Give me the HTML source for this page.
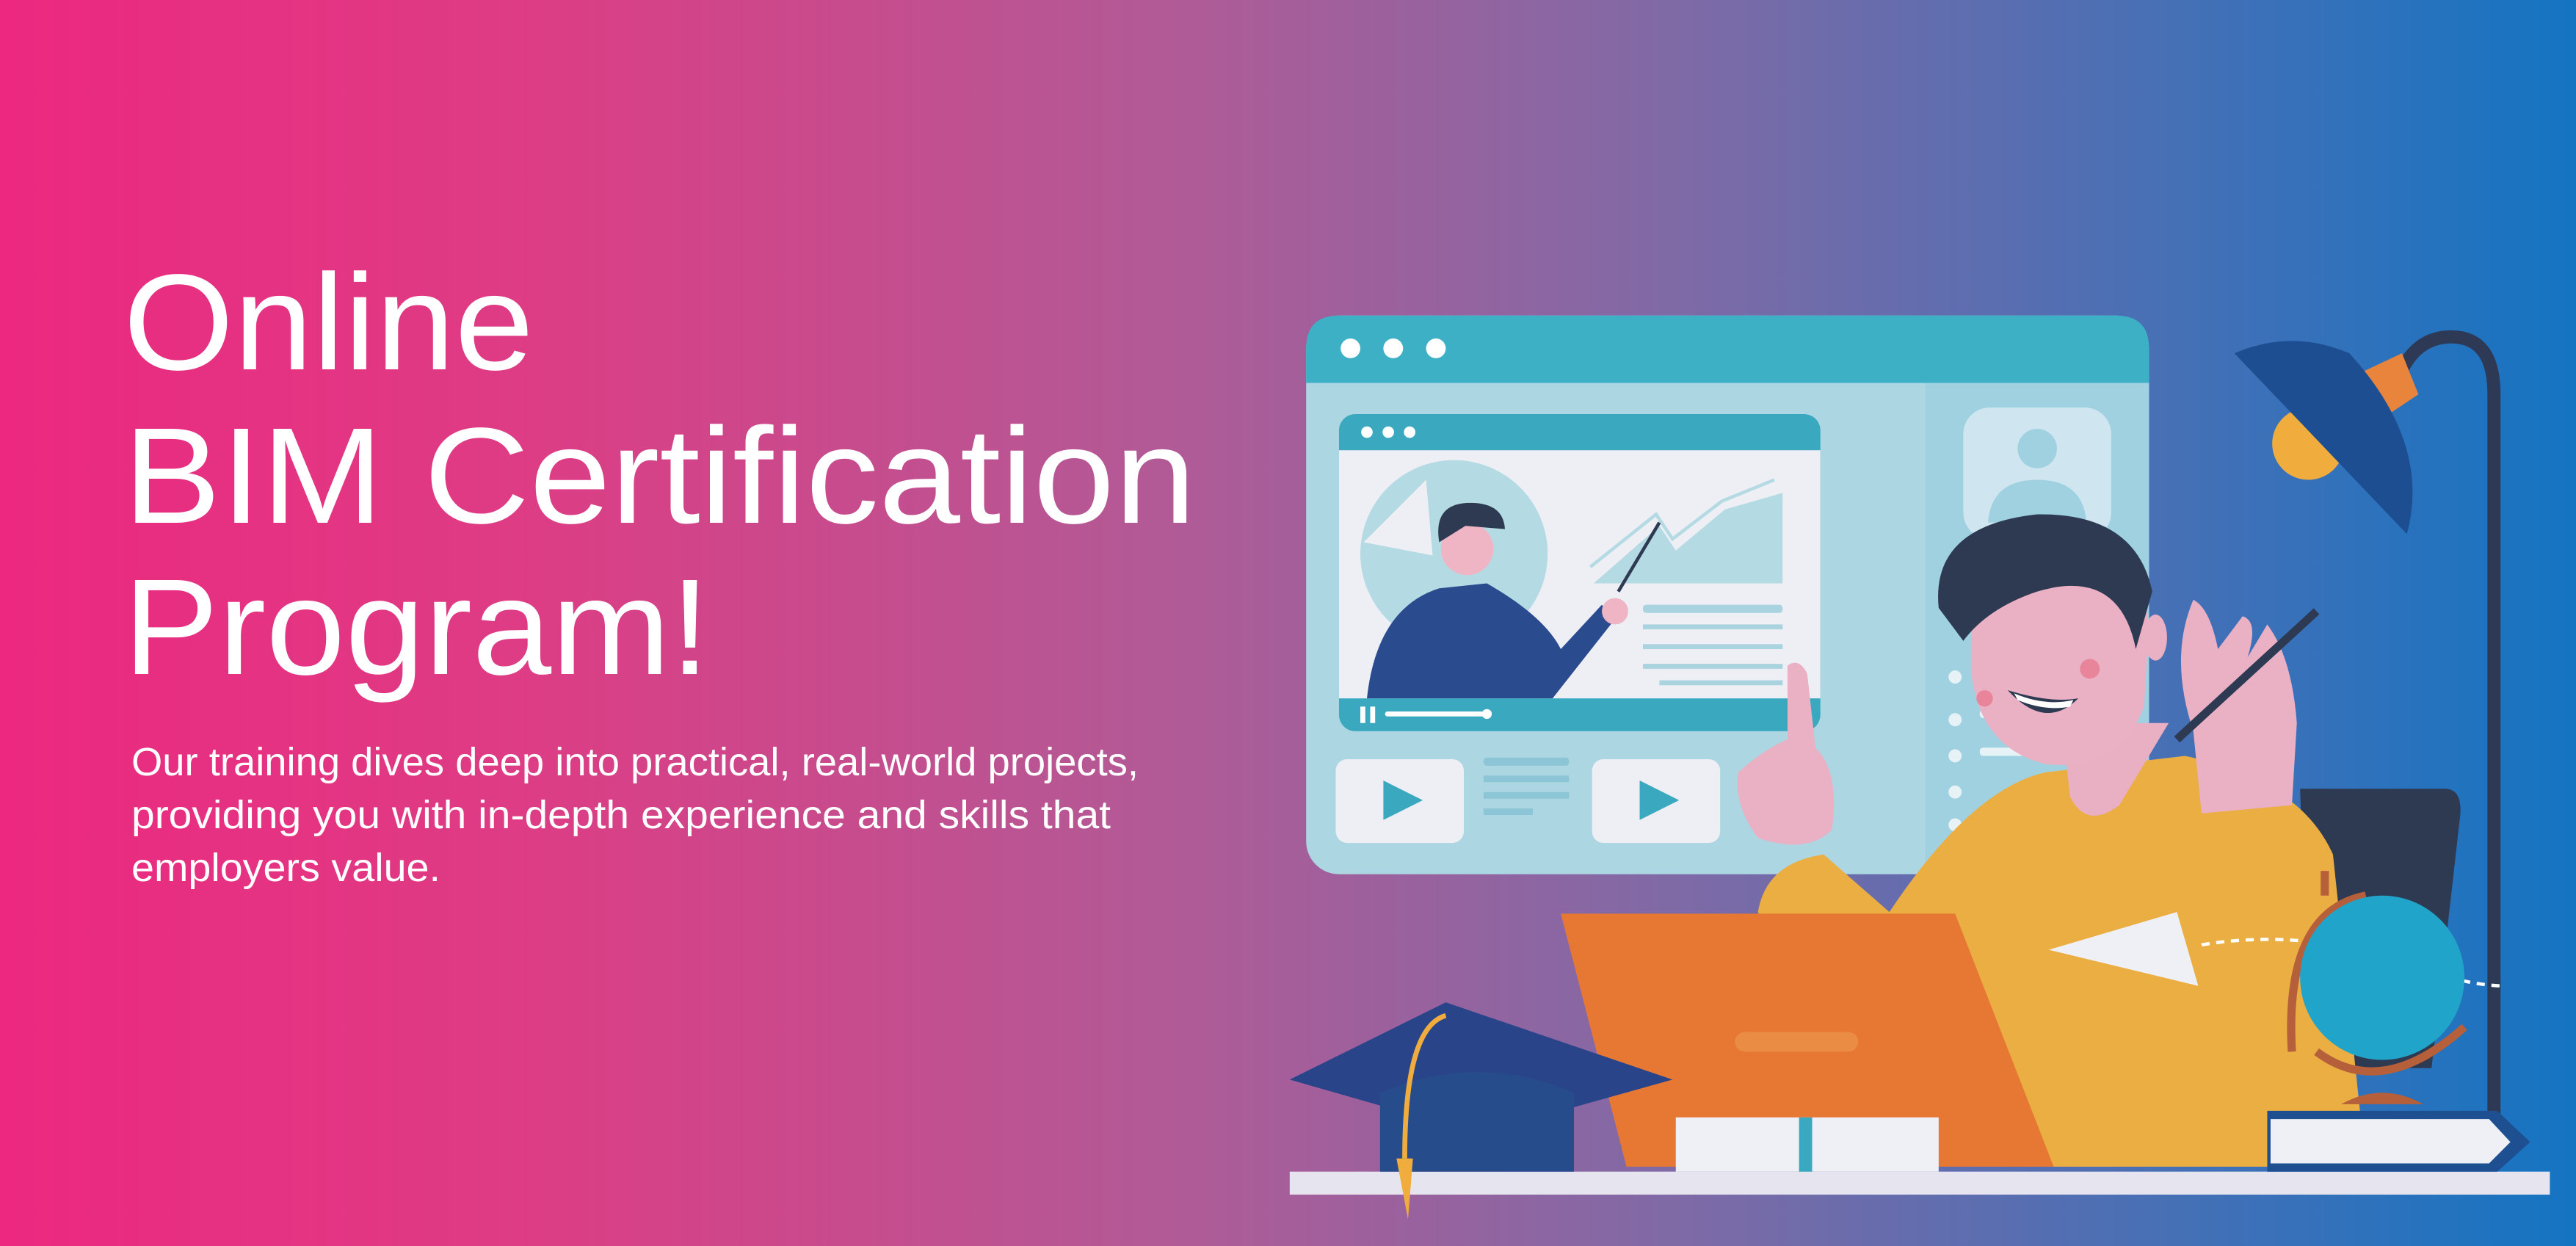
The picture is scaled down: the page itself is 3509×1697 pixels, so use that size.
<!DOCTYPE html>
<html><head><meta charset="utf-8"><style>
html,body{margin:0;padding:0;width:3509px;height:1697px;overflow:hidden}
svg{display:block}
</style></head><body>
<svg width="3509" height="1697" viewBox="0 0 3509 1697" xmlns="http://www.w3.org/2000/svg">
<defs>
<linearGradient id="bg" x1="0" y1="0" x2="1" y2="0">
<stop offset="0" stop-color="#ec2880"/>
<stop offset="0.2" stop-color="#de3c84"/>
<stop offset="0.45" stop-color="#b25a96"/>
<stop offset="0.65" stop-color="#7f6aa6"/>
<stop offset="0.85" stop-color="#4470b6"/>
<stop offset="1" stop-color="#1474c2"/>
</linearGradient>
</defs>
<rect width="3509" height="1697" fill="url(#bg)"/>
<g fill="#fff" font-family="'Liberation Sans',sans-serif">
<text x="168" y="503" font-size="186" textLength="559" lengthAdjust="spacingAndGlyphs">Online</text>
<text x="168" y="712" font-size="186" textLength="1461" lengthAdjust="spacingAndGlyphs">BIM Certification</text>
<text x="168" y="918" font-size="186" textLength="799" lengthAdjust="spacingAndGlyphs">Program!</text>
<text x="179" y="1056" font-size="54" textLength="1372" lengthAdjust="spacingAndGlyphs">Our training dives deep into practical, real-world projects,</text>
<text x="179" y="1128" font-size="54" textLength="1334" lengthAdjust="spacingAndGlyphs">providing you with in-depth experience and skills that</text>
<text x="179" y="1200" font-size="54" textLength="421" lengthAdjust="spacingAndGlyphs">employers value.</text>
</g>
<g transform="scale(2.238)">
<!-- lamp pole -->
<path d="M1518 690 V240 Q1518 205 1492 205 Q1472 205 1462 225" fill="none" stroke="#2e3a55" stroke-width="8"/>
<path d="M1430 230 L1462 215 L1472 240 L1445 258Z" fill="#e8843c"/>
<circle cx="1405" cy="270" r="22" fill="#f0ad3e"/>
<path d="M1360 215 Q1395 200 1430 215 Q1480 270 1465 325 Z" fill="#1d4e91"/>
<!-- browser window -->
<rect x="795" y="192" width="513" height="340" rx="20" fill="#acd6e2"/>
<path d="M815 192 H1288 Q1308 192 1308 212 V233 H795 V212 Q795 192 815 192Z" fill="#3db0c6"/>
<rect x="1172" y="233" width="136" height="299" fill="#9fd1e1"/>
<path d="M1172 233 H1308 V512 Q1308 532 1288 532 H1172Z" fill="#9fd1e1"/>
<circle cx="822" cy="212" r="6" fill="#fff"/><circle cx="848" cy="212" r="6" fill="#fff"/><circle cx="874" cy="212" r="6" fill="#fff"/>
<rect x="1195" y="248" width="90" height="80" rx="16" fill="#cfe6f0"/>
<circle cx="1240" cy="273" r="12" fill="#9fd1e1"/>
<path d="M1210 318 Q1212 292 1240 292 Q1268 292 1270 318Z" fill="#9fd1e1"/>
<g fill="#e7f2f6"><circle cx="1190" cy="412" r="4"/><circle cx="1190" cy="438" r="4"/><circle cx="1190" cy="460" r="4"/><circle cx="1190" cy="482" r="4"/><circle cx="1190" cy="502" r="4"/>
<rect x="1205" y="432" width="40" height="5" rx="2"/><rect x="1205" y="455" width="40" height="5" rx="2"/></g>
<!-- inner video -->
<rect x="815" y="252" width="293" height="193" rx="10" fill="#3aa9bf"/>
<rect x="815" y="274" width="293" height="151" fill="#eeeef5"/>
<circle cx="832" cy="263" r="3.5" fill="#fff"/><circle cx="845" cy="263" r="3.5" fill="#fff"/><circle cx="858" cy="263" r="3.5" fill="#fff"/>
<rect x="828" y="430" width="3" height="10" fill="#fff"/><rect x="834" y="430" width="3" height="10" fill="#fff"/>
<rect x="843" y="433" width="62" height="3" rx="1.5" fill="#fff"/><circle cx="905" cy="434.5" r="3" fill="#fff"/>
<circle cx="885" cy="337" r="57" fill="#b4dae3"/>
<path d="M868 292 L830 330 L872 338Z" fill="#eeeef5"/>
<path d="M970 355 L1010 320 L1020 335 L1050 310 L1085 300 V355Z" fill="#b4dae3"/>
<path d="M968 345 L1008 313 L1018 328 L1048 305 L1080 292" fill="none" stroke="#b4dae3" stroke-width="2"/>
<g fill="#a8d3df"><rect x="1000" y="368" width="85" height="5" rx="2"/><rect x="1000" y="380" width="85" height="3"/><rect x="1000" y="392" width="85" height="3"/><rect x="1000" y="404" width="85" height="3"/><rect x="1010" y="414" width="75" height="3"/></g>
<path d="M832 425 Q838 370 876 358 L905 355 Q940 375 950 395 L975 368 L982 378 L945 425Z" fill="#2a4b8e"/>
<circle cx="893" cy="334" r="16" fill="#efb5c4"/>
<path d="M876 330 Q872 306 895 306 Q915 306 916 322 L892 320 Z" fill="#2d3a52"/>
<line x1="985" y1="360" x2="1010" y2="318" stroke="#2d3a52" stroke-width="2"/>
<circle cx="983" cy="372" r="8" fill="#efb5c4"/>
<!-- play buttons -->
<rect x="813" y="462" width="78" height="51" rx="7" fill="#eeeef5"/>
<rect x="969" y="462" width="78" height="51" rx="7" fill="#eeeef5"/>
<path d="M842 475 L866 487 L842 499Z" fill="#3aa9bf"/><path d="M998 475 L1022 487 L998 499Z" fill="#3aa9bf"/>
<g fill="#8cc6d6"><rect x="903" y="461" width="52" height="5" rx="2"/><rect x="903" y="472" width="52" height="4"/><rect x="903" y="482" width="52" height="4"/><rect x="903" y="492" width="30" height="4"/></g>
<!-- chair -->
<path d="M1400 480 H1488 Q1500 480 1497 500 L1480 650 H1405Z" fill="#2d3a52"/>
<!-- boy body -->
<path d="M1070 555 Q1075 525 1110 520 L1150 555 Q1200 480 1245 470 L1330 460 Q1400 475 1420 520 L1440 710 H1150Z" fill="#eaae42"/>
<path d="M1255 440 L1260 485 Q1270 505 1290 490 L1320 440Z" fill="#e9afc2"/>
<!-- head -->
<path d="M1200 380 Q1198 330 1250 325 Q1300 330 1308 380 L1305 430 Q1290 470 1245 465 Q1205 455 1200 410Z" fill="#eab0c3"/>
<path d="M1180 370 Q1175 320 1240 313 Q1300 312 1310 360 L1300 395 Q1290 345 1240 360 Q1210 370 1195 390Z" fill="#2d3a52"/>
<path d="M1222 420 Q1245 445 1265 425 Q1248 428 1222 420Z" fill="#2d3a52"/>
<path d="M1226 422 Q1245 430 1262 426 L1260 430 Q1245 433 1228 426Z" fill="#fff"/>
<ellipse cx="1312" cy="388" rx="7" ry="14" fill="#eab0c3"/>
<circle cx="1208" cy="425" r="5" fill="#e9859b"/><circle cx="1272" cy="407" r="6" fill="#e9859b"/>
<!-- hands -->
<path d="M1088 405 Q1095 400 1100 410 L1105 455 Q1120 470 1115 505 Q1100 520 1070 510 Q1055 490 1058 470 Q1075 455 1088 450Z" fill="#eab0c3"/>
<path d="M1335 445 Q1320 400 1335 365 Q1345 370 1350 395 L1365 375 Q1375 378 1368 400 L1380 380 Q1395 400 1398 440 L1395 490 L1340 495Z" fill="#eab0c3"/>
<line x1="1325" y1="450" x2="1410" y2="372" stroke="#2d3a52" stroke-width="5"/>
<!-- desk items -->
<path d="M950 556 H1190 L1250 710 H990Z" fill="#e67833"/>
<rect x="1056" y="628" width="75" height="12" rx="6" fill="#eb8c45"/>
<rect x="785" y="713" width="767" height="14" fill="#e6e4ee"/>
<path d="M1247 578 L1325 555 L1338 600Z" fill="#eef0f6"/>
<path d="M1340 575 Q1400 565 1460 585 Q1500 600 1525 600" fill="none" stroke="#fff" stroke-width="2" stroke-dasharray="5 4"/>
<path d="M1415 545 V530 M1395 640 Q1390 555 1440 545" fill="none" stroke="#b5603a" stroke-width="5"/>
<circle cx="1450" cy="595" r="50" fill="#20a4c9"/>
<path d="M1410 640 Q1450 670 1500 625" fill="none" stroke="#b5603a" stroke-width="5"/>
<path d="M1425 672 Q1450 658 1475 672Z" fill="#b5603a"/>
<path d="M1380 676 H1520 L1540 695 L1520 713 H1380Z" fill="#1e4f90"/>
<path d="M1382 681 H1515 L1528 695 L1515 708 H1382Z" fill="#eef0f6"/>
<rect x="1020" y="680" width="160" height="33" fill="#eef0f6"/>
<rect x="1095" y="680" width="8" height="33" fill="#3aa9bf"/>
<path d="M785 657 L880 610 L1018 657 L900 690Z" fill="#2a4489"/>
<path d="M840 665 Q900 640 958 665 V713 H840Z" fill="#274c8c"/>
<path d="M880 618 Q855 625 855 705" fill="none" stroke="#f0ad3e" stroke-width="3"/>
<path d="M850 705 L860 705 L857 742Z" fill="#f0ad3e"/>
</g>
</svg>
</body></html>
